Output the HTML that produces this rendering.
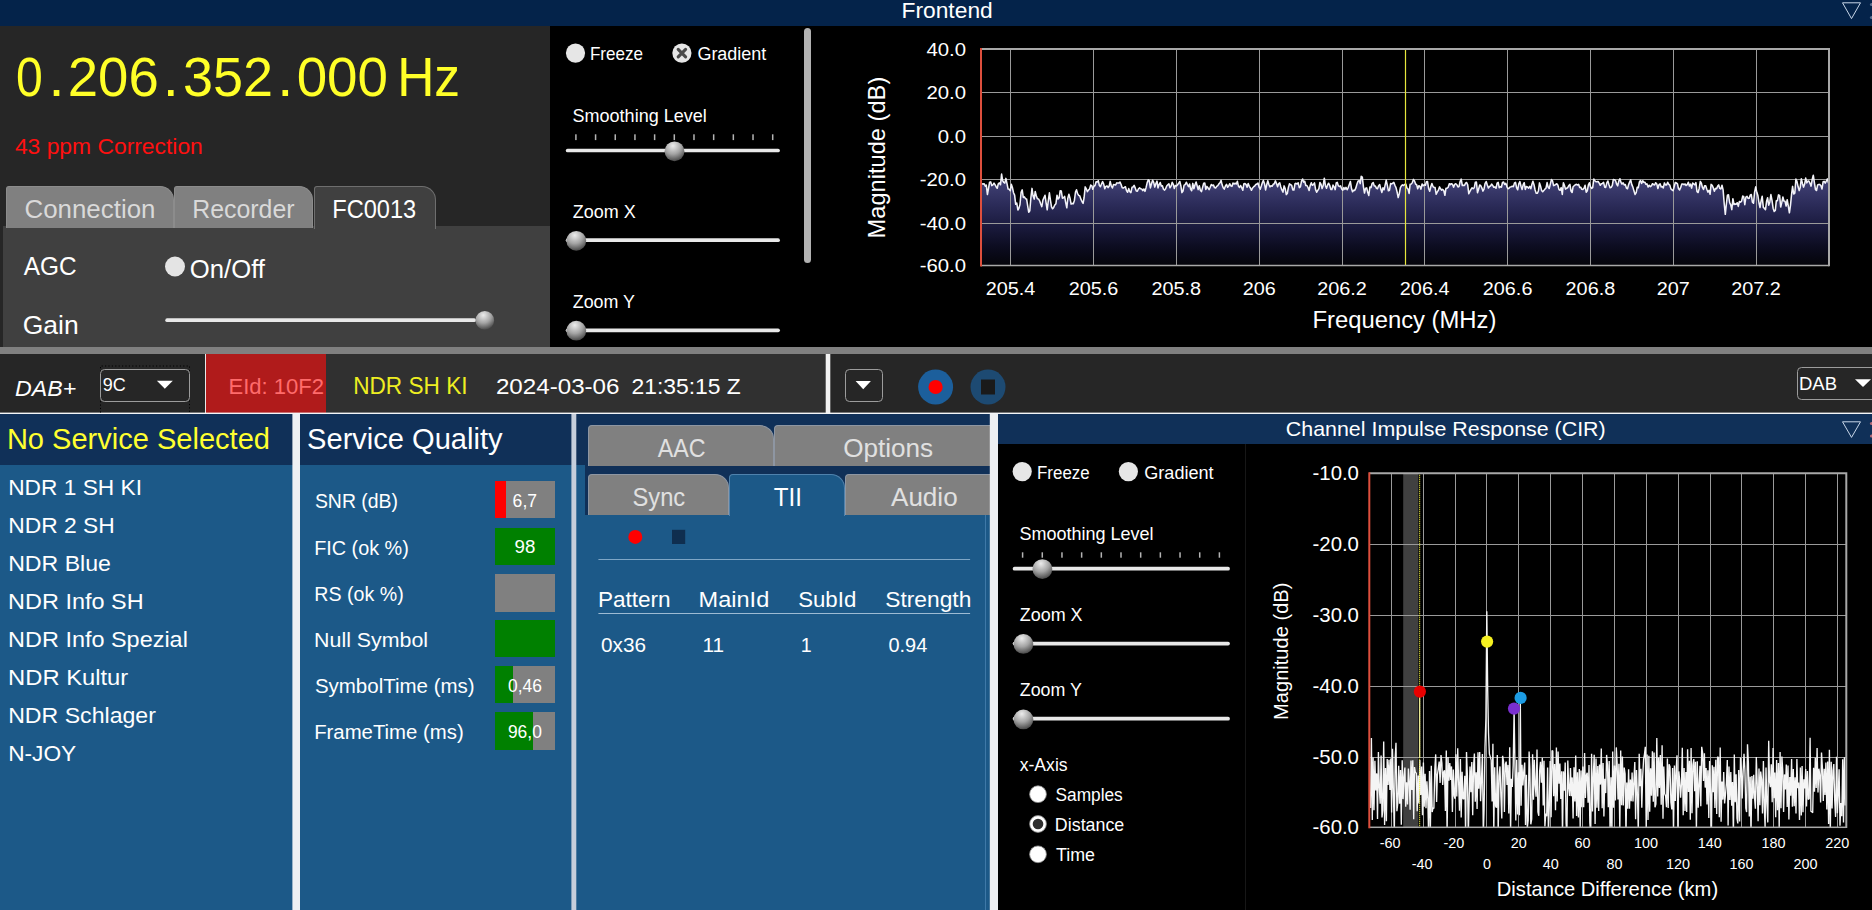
<!DOCTYPE html>
<html><head><meta charset="utf-8"><title>DAB Frontend</title>
<style>
html,body{margin:0;padding:0;background:#000;}
#app{position:relative;width:1872px;height:910px;overflow:hidden;background:#000;font-family:"Liberation Sans",sans-serif;}
#app div{position:absolute;box-sizing:border-box;}
#ov{position:absolute;left:0;top:0;}
#ov text{font-family:"Liberation Sans",sans-serif;white-space:pre;}
</style></head><body>
<div id="app">
<div class="titlebar" style="left:0px;top:0px;width:1872px;height:26px;background:#04234a;"></div>
<div class="frontend-left" style="left:0px;top:26px;width:550px;height:321px;background:#262626;"></div>
<div class="tabcontent" style="left:3px;top:226px;width:547px;height:121px;background:#404040;"></div>
<div class="tab" style="left:6px;top:186px;width:168px;height:42px;background:#808080;border:1px solid #8c8c8c;border-bottom:none;border-radius:3px 14px 0 0;"></div>
<div class="tab" style="left:174px;top:186px;width:139px;height:42px;background:#808080;border:1px solid #8c8c8c;border-bottom:none;border-radius:3px 14px 0 0;"></div>
<div class="tab" style="left:314px;top:186px;width:122px;height:43px;background:#404040;border:1px solid #6e6e6e;border-bottom:none;border-radius:3px 14px 0 0;"></div>
<div class="frontend-plot" style="left:550px;top:26px;width:1322px;height:321px;background:#000;"></div>
<div class="hsplit" style="left:0px;top:347px;width:1872px;height:7px;background:#808080;"></div>
<div class="toolbar-a" style="left:0px;top:354px;width:206px;height:59px;background:#262626;"></div>
<div style="left:205px;top:354px;width:1px;height:59px;background:#e8e8e8;"></div>
<div class="toolbar-b" style="left:206px;top:354px;width:620px;height:59px;background:#303030;"></div>
<div class="eid" style="left:206px;top:354px;width:120px;height:59px;background:#b01b1b;"></div>
<div style="left:826px;top:354px;width:4px;height:59px;background:#f2f2f2;"></div>
<div class="toolbar-c" style="left:830px;top:354px;width:1042px;height:59px;background:#262626;"></div>
<div class="hline" style="left:0px;top:412.5px;width:1872px;height:1.5px;background:#f4f6f8;"></div>
<div class="hdr" style="left:0px;top:414px;width:293px;height:51px;background:#103058;"></div>
<div class="list" style="left:0px;top:465px;width:293px;height:445px;background:#1c5988;"></div>
<div class="vsplit" style="left:292.5px;top:414px;width:7.5px;height:496px;background:#eef0f3;"></div>
<div class="hdr" style="left:300px;top:414px;width:272px;height:51px;background:#103058;"></div>
<div class="quality" style="left:300px;top:465px;width:272px;height:445px;background:#1c5988;"></div>
<div class="vsplit" style="left:571.5px;top:414px;width:4.8px;height:496px;background:#c6cedb;"></div>
<div class="hdr" style="left:576px;top:414px;width:414px;height:51px;background:#103058;"></div>
<div class="tii" style="left:576px;top:465px;width:414px;height:445px;background:#1c5988;"></div>
<div class="tabstrip" style="left:585px;top:414px;width:405px;height:101px;background:#103058;"></div>
<div style="left:985px;top:515px;width:1px;height:395px;background:#3f79a8;"></div>
<div class="vsplit" style="left:990px;top:414px;width:7.5px;height:496px;background:#eef0f3;"></div>
<div class="hdr" style="left:997.5px;top:414px;width:875px;height:30px;background:#103058;"></div>
<div class="cir" style="left:997.5px;top:444px;width:875px;height:466px;background:#000;"></div>
<div style="left:1245px;top:444px;width:1px;height:466px;background:#171717;"></div>
<div class="bar" style="left:495px;top:481px;width:60px;height:37.4px;background:#808080;"><div style="left:0;top:0;width:10.7px;height:100%;background:#ff0000"></div></div>
<div class="bar" style="left:495px;top:528px;width:60px;height:37.4px;background:#808080;"><div style="left:0;top:0;width:60px;height:100%;background:#008000"></div></div>
<div class="bar" style="left:495px;top:574.2px;width:60px;height:37.4px;background:#808080;"></div>
<div class="bar" style="left:495px;top:620px;width:60px;height:37.4px;background:#808080;"><div style="left:0;top:0;width:60px;height:100%;background:#008000"></div></div>
<div class="bar" style="left:495px;top:665.8px;width:60px;height:37.4px;background:#808080;"><div style="left:0;top:0;width:18px;height:100%;background:#008000"></div></div>
<div class="bar" style="left:495px;top:712.2px;width:60px;height:37.4px;background:#808080;"><div style="left:0;top:0;width:38px;height:100%;background:#008000"></div></div>
<div class="tab" style="left:588px;top:425px;width:185.60000000000002px;height:40.69999999999999px;background:#808080;border:1px solid #8e96a2;border-bottom:none;border-radius:4px 14px 0 0;"></div>
<div class="tab" style="left:773.6px;top:425px;width:216.39999999999998px;height:40.69999999999999px;background:#808080;border:1px solid #8e96a2;border-bottom:none;border-radius:4px 0 0 0;border-right:none;"></div>
<div class="tab" style="left:588px;top:474px;width:141.39999999999998px;height:41px;background:#808080;border:1px solid #8e96a2;border-bottom:none;border-radius:4px 14px 0 0;"></div>
<div class="tab" style="left:844.6px;top:474px;width:145.39999999999998px;height:41px;background:#808080;border:1px solid #8e96a2;border-bottom:none;border-radius:4px 0 0 0;border-right:none;"></div>
<div class="tabpanel" style="left:585px;top:515px;width:401px;height:395px;background:#1c5988;border-right:1px solid #3f79a8;"></div>
<div class="tab" style="left:729.4px;top:474px;width:115.20000000000005px;height:42px;background:#1c5988;border:1px solid #4f82ad;border-bottom:none;border-radius:4px 14px 0 0;"></div>
<svg id="ov" width="1872" height="910" viewBox="0 0 1872 910">
<defs>
<radialGradient id="knob" cx="0.42" cy="0.22" r="0.85"><stop offset="0" stop-color="#ececec"/><stop offset="0.5" stop-color="#a4a4a4"/><stop offset="1" stop-color="#383838"/></radialGradient>
<linearGradient id="specfill" gradientUnits="userSpaceOnUse" x1="0" y1="176" x2="0" y2="266"><stop offset="0" stop-color="#45457a"/><stop offset="0.3" stop-color="#2d2d5b"/><stop offset="0.53" stop-color="#1c1c41"/><stop offset="0.79" stop-color="#0c0c20"/><stop offset="1" stop-color="#040409"/></linearGradient>
<clipPath id="clip1"><rect x="981" y="49" width="848" height="217"/></clipPath>
<clipPath id="clip2"><rect x="1369" y="473" width="477" height="354.5"/></clipPath>
</defs>
<rect x="825.7" y="354" width="4.6" height="59" fill="#f2f2f2"/>
<rect x="0" y="412.6" width="1872" height="1.4" fill="#f4f6f8"/>
<rect x="989.8" y="414" width="7.6" height="496" fill="#eef0f3"/>
<rect x="571.4" y="414" width="4.9" height="496" fill="#c6cedb"/>
<rect x="292.4" y="414" width="7.6" height="496" fill="#eef0f3"/>
<text transform="translate(901.47,17.60) scale(1.0602,1)" font-size="21.53" fill="#ffffff" style="">Frontend</text>
<text transform="translate(24.51,217.60) scale(1.0111,1)" font-size="25.60" fill="#d9d9d9" style="">Connection</text>
<text transform="translate(192.21,217.60) scale(0.9723,1)" font-size="25.60" fill="#d9d9d9" style="">Recorder</text>
<text transform="translate(332.21,217.60) scale(0.9234,1)" font-size="25.60" fill="#ffffff" style="">FC0013</text>
<text transform="translate(14.89,153.80) scale(1.0766,1)" font-size="21.24" fill="#ff1010" style="">43 ppm Correction</text>
<text transform="translate(23.80,275.00) scale(0.9429,1)" font-size="25.89" fill="#ffffff" style="">AGC</text>
<text transform="translate(22.67,333.80) scale(1.0248,1)" font-size="25.89" fill="#ffffff" style="">Gain</text>
<text transform="translate(189.84,277.90) scale(1.0266,1)" font-size="25.02" fill="#ffffff" style="">On/Off</text>
<circle cx="175" cy="266.5" r="10" fill="#e4e4e4"/>
<text transform="translate(16.10,96.20) scale(0.8730,1)" font-size="55.13" fill="#ffff28" style="">0</text>
<text transform="translate(67.77,96.20) scale(0.9893,1)" font-size="55.13" fill="#ffff28" style="">206</text>
<text transform="translate(183.08,96.20) scale(0.9789,1)" font-size="55.13" fill="#ffff28" style="">352</text>
<text transform="translate(296.65,96.20) scale(0.9933,1)" font-size="55.13" fill="#ffff28" style="">000</text>
<text transform="translate(397.18,96.20) scale(0.9343,1)" font-size="55.13" fill="#ffff28" style="">Hz</text>
<text transform="translate(48.47,96.20) scale(1.0500,1)" font-size="55.13" fill="#ffff28">.</text>
<text transform="translate(162.77,96.20) scale(1.0500,1)" font-size="55.13" fill="#ffff28">.</text>
<text transform="translate(277.17,96.20) scale(1.0500,1)" font-size="55.13" fill="#ffff28">.</text>
<rect x="165.3" y="318.34999999999997" width="310.7" height="3.7" rx="1.85" fill="#e8e8e8"/>
<circle cx="484.8" cy="320.4" r="9.3" fill="url(#knob)"/>
<circle cx="575.5" cy="53.1" r="9.6" fill="#e6e6e6"/>
<text transform="translate(589.93,60.10) scale(0.9241,1)" font-size="18.47" fill="#ffffff" style="">Freeze</text>
<circle cx="681.9" cy="53.1" r="9.6" fill="#e6e6e6"/>
<path d="M678.2 49.4 L685.6 56.8 M685.6 49.4 L678.2 56.8" stroke="#4a4a4a" stroke-width="3.1" stroke-linecap="round" fill="none"/>
<text transform="translate(697.40,60.10) scale(0.9738,1)" font-size="18.47" fill="#ffffff" style="">Gradient</text>
<text transform="translate(572.59,122.00) scale(0.9750,1)" font-size="18.47" fill="#ffffff" style="">Smoothing Level</text>
<rect x="575.15" y="134.3" width="1.5" height="5.799999999999983" fill="#b4b4b4"/>
<rect x="594.83" y="134.3" width="1.5" height="5.799999999999983" fill="#b4b4b4"/>
<rect x="614.51" y="134.3" width="1.5" height="5.799999999999983" fill="#b4b4b4"/>
<rect x="634.19" y="134.3" width="1.5" height="5.799999999999983" fill="#b4b4b4"/>
<rect x="653.87" y="134.3" width="1.5" height="5.799999999999983" fill="#b4b4b4"/>
<rect x="673.55" y="134.3" width="1.5" height="5.799999999999983" fill="#b4b4b4"/>
<rect x="693.23" y="134.3" width="1.5" height="5.799999999999983" fill="#b4b4b4"/>
<rect x="712.91" y="134.3" width="1.5" height="5.799999999999983" fill="#b4b4b4"/>
<rect x="732.59" y="134.3" width="1.5" height="5.799999999999983" fill="#b4b4b4"/>
<rect x="752.27" y="134.3" width="1.5" height="5.799999999999983" fill="#b4b4b4"/>
<rect x="771.95" y="134.3" width="1.5" height="5.799999999999983" fill="#b4b4b4"/>
<rect x="565.8" y="148.65" width="214.10000000000002" height="3.7" rx="1.85" fill="#e8e8e8"/>
<circle cx="674.5" cy="151.3" r="9.9" fill="url(#knob)"/>
<text transform="translate(572.76,218.00) scale(0.9737,1)" font-size="18.47" fill="#ffffff" style="">Zoom X</text>
<rect x="565.8" y="238.35" width="214.10000000000002" height="3.7" rx="1.85" fill="#e8e8e8"/>
<circle cx="576.3" cy="240.8" r="9.9" fill="url(#knob)"/>
<text transform="translate(572.76,308.00) scale(0.9675,1)" font-size="18.47" fill="#ffffff" style="">Zoom Y</text>
<rect x="565.8" y="328.45" width="214.10000000000002" height="3.7" rx="1.85" fill="#e8e8e8"/>
<circle cx="576.3" cy="330.7" r="9.9" fill="url(#knob)"/>
<rect x="804" y="28" width="7" height="235" rx="3.5" fill="#b2b2b2"/>
<text transform="translate(15.11,395.90) scale(1.0538,1)" font-size="21.96" fill="#ffffff" style="font-style:italic;">DAB+</text>
<path d="M100.5 412.5 V366 H189.5 V412.5" fill="none" stroke="#000" stroke-width="1" stroke-dasharray="1.2 2.2"/>
<rect x="100.5" y="369.5" width="89" height="32" rx="4" fill="none" stroke="#9c9c9c" stroke-width="1"/>
<text transform="translate(102.69,391.30) scale(0.9371,1)" font-size="19.20" fill="#ffffff" style="">9C</text>
<path d="M156.9 380.8 L172.8 380.8 L164.85 388.8 Z" fill="#ffffff"/>
<text transform="translate(228.44,393.80) scale(0.9597,1)" font-size="22.98" fill="#ff6b6b" style="">EId: 10F2</text>
<text transform="translate(353.19,393.80) scale(0.9852,1)" font-size="22.98" fill="#eeee22" style="">NDR SH KI</text>
<text transform="translate(495.89,393.80) scale(1.0518,1)" font-size="22.98" fill="#ffffff" style="">2024-03-06</text>
<text transform="translate(631.46,393.80) scale(0.9962,1)" font-size="22.98" fill="#ffffff" style="">21:35:15 Z</text>
<rect x="845.5" y="369.5" width="37" height="32" rx="4" fill="none" stroke="#9c9c9c" stroke-width="1"/>
<path d="M855.6 381 L870.9 381 L863.25 389.2 Z" fill="#ffffff"/>
<circle cx="935.6" cy="387" r="17.5" fill="#1c5f9c"/><circle cx="935.6" cy="387" r="7.1" fill="#ff0000"/>
<circle cx="988" cy="387" r="17.5" fill="#1d4a72"/><rect x="981" y="379.5" width="14" height="15" fill="#1a1a1a"/>
<rect x="1797.5" y="367.5" width="90" height="32" rx="4" fill="none" stroke="#9c9c9c" stroke-width="1"/>
<text transform="translate(1799.02,389.80) scale(0.9632,1)" font-size="19.20" fill="#ffffff" style="">DAB</text>
<path d="M1855 379.3 L1871 379.3 L1863 387 Z" fill="#ffffff"/>
<path d="M1842.5 2.8 L1860.5 2.8 L1851.5 18.6 Z" fill="none" stroke="#c8d6e8" stroke-width="1"/>
<path d="M1842.5 421.8 L1860.5 421.8 L1851.5 437.4 Z" fill="none" stroke="#c8d6e8" stroke-width="1"/>
<circle cx="1871.5" cy="423.5" r="1.6" fill="#b06a78"/><circle cx="1871.5" cy="436" r="1.6" fill="#b06a78"/>
<circle cx="1871.5" cy="4.5" r="1.6" fill="#5a6f8f"/><circle cx="1871.5" cy="17.5" r="1.6" fill="#5a6f8f"/>
<text transform="translate(6.88,448.80) scale(0.9889,1)" font-size="29.38" fill="#ffff30" style="">No Service Selected</text>
<text transform="translate(8.18,495.40) scale(0.9889,1)" font-size="22.98" fill="#ffffff" style="">NDR 1 SH KI</text>
<text transform="translate(8.17,533.32) scale(0.9943,1)" font-size="22.98" fill="#ffffff" style="">NDR 2 SH</text>
<text transform="translate(8.15,571.24) scale(1.0067,1)" font-size="22.98" fill="#ffffff" style="">NDR Blue</text>
<text transform="translate(8.12,609.16) scale(1.0205,1)" font-size="22.98" fill="#ffffff" style="">NDR Info SH</text>
<text transform="translate(8.12,647.08) scale(1.0200,1)" font-size="22.98" fill="#ffffff" style="">NDR Info Spezial</text>
<text transform="translate(8.10,685.00) scale(1.0338,1)" font-size="22.98" fill="#ffffff" style="">NDR Kultur</text>
<text transform="translate(8.15,722.92) scale(1.0064,1)" font-size="22.98" fill="#ffffff" style="">NDR Schlager</text>
<text transform="translate(8.18,760.84) scale(0.9881,1)" font-size="22.98" fill="#ffffff" style="">N-JOY</text>
<text transform="translate(307.09,448.90) scale(0.9895,1)" font-size="29.38" fill="#ffffff" style="">Service Quality</text>
<text transform="translate(314.93,508.20) scale(0.9333,1)" font-size="20.80" fill="#ffffff" style="">SNR (dB)</text>
<text transform="translate(314.21,554.60) scale(0.9527,1)" font-size="20.80" fill="#ffffff" style="">FIC (ok %)</text>
<text transform="translate(314.23,600.60) scale(0.9441,1)" font-size="20.80" fill="#ffffff" style="">RS (ok %)</text>
<text transform="translate(314.09,646.80) scale(1.0273,1)" font-size="20.80" fill="#ffffff" style="">Null Symbol</text>
<text transform="translate(314.88,692.50) scale(0.9859,1)" font-size="20.80" fill="#ffffff" style="">SymbolTime (ms)</text>
<text transform="translate(314.17,738.60) scale(0.9782,1)" font-size="20.80" fill="#ffffff" style="">FrameTime (ms)</text>
<text transform="translate(512.62,506.80) scale(0.9507,1)" font-size="18.47" fill="#ffffff" style="">6,7</text>
<text transform="translate(514.56,553.20) scale(1.0140,1)" font-size="18.47" fill="#ffffff" style="">98</text>
<text transform="translate(508.05,692.00) scale(0.9434,1)" font-size="18.47" fill="#ffffff" style="">0,46</text>
<text transform="translate(507.91,738.00) scale(0.9446,1)" font-size="18.47" fill="#ffffff" style="">96,0</text>
<text transform="translate(657.80,456.90) scale(0.9089,1)" font-size="25.60" fill="#e0e0e0" style="">AAC</text>
<text transform="translate(843.23,456.90) scale(1.0196,1)" font-size="25.60" fill="#e0e0e0" style="">Options</text>
<text transform="translate(632.53,506.10) scale(0.9255,1)" font-size="25.60" fill="#e0e0e0" style="">Sync</text>
<text transform="translate(773.72,506.10) scale(0.9442,1)" font-size="25.60" fill="#ffffff" style="">TII</text>
<text transform="translate(891.00,506.10) scale(1.0179,1)" font-size="25.60" fill="#e0e0e0" style="">Audio</text>
<circle cx="635.3" cy="536.9" r="7" fill="#ff0000"/>
<rect x="672" y="529.8" width="13.2" height="14.2" fill="#0f2e4f"/>
<rect x="598.4" y="559" width="371.7" height="1" fill="#7ea6c6"/>
<text transform="translate(597.89,606.70) scale(1.0154,1)" font-size="22.25" fill="#ffffff" style="">Pattern</text>
<text transform="translate(698.62,606.70) scale(1.0583,1)" font-size="22.25" fill="#ffffff" style="">MainId</text>
<text transform="translate(798.20,606.70) scale(0.9991,1)" font-size="22.25" fill="#ffffff" style="">SubId</text>
<text transform="translate(885.27,606.70) scale(1.0241,1)" font-size="22.25" fill="#ffffff" style="">Strength</text>
<rect x="598.4" y="613" width="371.7" height="1" fill="#9dbbd3"/>
<text transform="translate(601.02,651.50) scale(1.0114,1)" font-size="20.51" fill="#ffffff" style="">0x36</text>
<text transform="translate(702.54,651.50) scale(1.0125,1)" font-size="20.51" fill="#ffffff" style="">11</text>
<text transform="translate(800.63,651.50) scale(0.9583,1)" font-size="20.51" fill="#ffffff" style="">1</text>
<text transform="translate(888.45,651.50) scale(0.9726,1)" font-size="20.51" fill="#ffffff" style="">0.94</text>
<text transform="translate(1285.83,435.60) scale(1.0151,1)" font-size="21.09" fill="#ffffff" style="">Channel Impulse Response (CIR)</text>
<circle cx="1022.2" cy="471.6" r="9.6" fill="#e6e6e6"/>
<text transform="translate(1037.05,478.80) scale(0.9151,1)" font-size="18.47" fill="#ffffff" style="">Freeze</text>
<circle cx="1128.4" cy="471.6" r="9.6" fill="#e6e6e6"/>
<text transform="translate(1144.30,478.80) scale(0.9781,1)" font-size="18.47" fill="#ffffff" style="">Gradient</text>
<text transform="translate(1019.49,540.10) scale(0.9750,1)" font-size="18.47" fill="#ffffff" style="">Smoothing Level</text>
<rect x="1021.85" y="552.3" width="1.5" height="5.400000000000091" fill="#b4b4b4"/>
<rect x="1041.53" y="552.3" width="1.5" height="5.400000000000091" fill="#b4b4b4"/>
<rect x="1061.21" y="552.3" width="1.5" height="5.400000000000091" fill="#b4b4b4"/>
<rect x="1080.89" y="552.3" width="1.5" height="5.400000000000091" fill="#b4b4b4"/>
<rect x="1100.57" y="552.3" width="1.5" height="5.400000000000091" fill="#b4b4b4"/>
<rect x="1120.25" y="552.3" width="1.5" height="5.400000000000091" fill="#b4b4b4"/>
<rect x="1139.93" y="552.3" width="1.5" height="5.400000000000091" fill="#b4b4b4"/>
<rect x="1159.61" y="552.3" width="1.5" height="5.400000000000091" fill="#b4b4b4"/>
<rect x="1179.29" y="552.3" width="1.5" height="5.400000000000091" fill="#b4b4b4"/>
<rect x="1198.97" y="552.3" width="1.5" height="5.400000000000091" fill="#b4b4b4"/>
<rect x="1218.65" y="552.3" width="1.5" height="5.400000000000091" fill="#b4b4b4"/>
<rect x="1012.7" y="566.85" width="217.20000000000005" height="3.7" rx="1.85" fill="#e8e8e8"/>
<circle cx="1042.4" cy="569.1" r="9.9" fill="url(#knob)"/>
<text transform="translate(1019.76,621.10) scale(0.9721,1)" font-size="18.47" fill="#ffffff" style="">Zoom X</text>
<rect x="1012.7" y="641.75" width="217.20000000000005" height="3.7" rx="1.85" fill="#e8e8e8"/>
<circle cx="1023.4" cy="643.9" r="9.9" fill="url(#knob)"/>
<text transform="translate(1019.76,695.80) scale(0.9659,1)" font-size="18.47" fill="#ffffff" style="">Zoom Y</text>
<rect x="1012.7" y="716.85" width="217.20000000000005" height="3.7" rx="1.85" fill="#e8e8e8"/>
<circle cx="1023.4" cy="719.4" r="9.9" fill="url(#knob)"/>
<text transform="translate(1019.72,770.80) scale(0.9832,1)" font-size="17.89" fill="#ffffff" style="">x-Axis</text>
<circle cx="1038" cy="794.2" r="8.4" fill="#ffffff" stroke="#8a8a8a" stroke-width="0.8"/>
<text transform="translate(1055.52,800.70) scale(0.9668,1)" font-size="17.89" fill="#ffffff" style="">Samples</text>
<circle cx="1038" cy="824.0" r="8.4" fill="#ffffff" stroke="#8a8a8a" stroke-width="0.8"/>
<circle cx="1038" cy="824.0" r="5.3" fill="#2e2e2e"/>
<text transform="translate(1054.87,830.60) scale(0.9970,1)" font-size="17.89" fill="#ffffff" style="">Distance</text>
<circle cx="1038" cy="854.3" r="8.4" fill="#ffffff" stroke="#8a8a8a" stroke-width="0.8"/>
<text transform="translate(1055.94,860.50) scale(0.9981,1)" font-size="17.89" fill="#ffffff" style="">Time</text>
<g id="spectrum"><polygon points="982.0,265.5 982.0,183.8 983.1,184.1 984.2,183.7 985.3,186.2 986.3,185.0 987.4,194.5 988.5,188.5 989.6,182.2 990.7,181.9 991.8,185.6 992.9,184.8 994.0,183.1 995.0,184.7 996.1,186.7 997.2,188.3 998.3,183.8 999.4,182.9 1000.5,184.8 1001.6,174.1 1002.6,180.5 1003.7,182.4 1004.8,183.1 1005.9,178.4 1007.0,183.7 1008.1,189.1 1009.2,189.2 1010.3,190.7 1011.3,184.3 1012.4,187.5 1013.5,192.7 1014.6,195.1 1015.7,204.3 1016.8,203.1 1017.9,210.0 1018.9,208.4 1020.0,204.5 1021.1,192.3 1022.2,189.9 1023.3,197.5 1024.4,196.9 1025.5,198.7 1026.6,198.9 1027.6,205.4 1028.7,212.2 1029.8,210.7 1030.9,197.6 1032.0,188.4 1033.1,196.1 1034.2,199.1 1035.2,191.5 1036.3,195.8 1037.4,198.8 1038.5,198.9 1039.6,200.8 1040.7,204.0 1041.8,206.6 1042.9,200.1 1043.9,197.8 1045.0,195.2 1046.1,202.9 1047.2,209.8 1048.3,200.9 1049.4,192.8 1050.5,200.6 1051.5,206.8 1052.6,208.8 1053.7,207.4 1054.8,205.0 1055.9,203.8 1057.0,195.3 1058.1,198.9 1059.2,197.7 1060.2,190.7 1061.3,191.0 1062.4,198.2 1063.5,197.7 1064.6,196.4 1065.7,202.6 1066.8,207.8 1067.8,198.4 1068.9,194.2 1070.0,198.2 1071.1,204.1 1072.2,203.4 1073.3,203.7 1074.4,200.4 1075.5,192.0 1076.5,189.7 1077.6,193.6 1078.7,195.4 1079.8,196.0 1080.9,199.2 1082.0,201.5 1083.1,203.4 1084.1,197.5 1085.2,186.9 1086.3,188.8 1087.4,191.6 1088.5,190.1 1089.6,188.9 1090.7,185.1 1091.8,185.6 1092.8,189.2 1093.9,186.3 1095.0,185.5 1096.1,181.7 1097.2,182.0 1098.3,180.7 1099.4,185.6 1100.4,186.7 1101.5,184.0 1102.6,181.6 1103.7,184.1 1104.8,188.7 1105.9,186.4 1107.0,185.9 1108.1,187.6 1109.1,186.3 1110.2,181.4 1111.3,186.0 1112.4,188.0 1113.5,184.5 1114.6,184.7 1115.7,185.0 1116.7,182.9 1117.8,183.0 1118.9,183.1 1120.0,182.1 1121.1,184.5 1122.2,187.7 1123.3,188.0 1124.4,187.4 1125.4,186.7 1126.5,190.6 1127.6,192.3 1128.7,188.6 1129.8,191.7 1130.9,192.6 1132.0,187.3 1133.0,187.0 1134.1,185.4 1135.2,187.9 1136.3,190.9 1137.4,191.2 1138.5,188.8 1139.6,187.9 1140.7,188.8 1141.7,189.0 1142.8,190.7 1143.9,189.0 1145.0,191.4 1146.1,187.4 1147.2,182.6 1148.3,179.9 1149.3,180.9 1150.4,187.9 1151.5,183.7 1152.6,180.2 1153.7,182.4 1154.8,187.1 1155.9,183.5 1157.0,181.1 1158.0,187.9 1159.1,184.6 1160.2,182.5 1161.3,186.1 1162.4,185.7 1163.5,189.2 1164.6,190.1 1165.6,188.8 1166.7,186.0 1167.8,184.8 1168.9,183.8 1170.0,187.7 1171.1,186.1 1172.2,182.3 1173.3,184.3 1174.3,188.5 1175.4,185.5 1176.5,186.1 1177.6,184.7 1178.7,183.1 1179.8,181.5 1180.9,186.0 1181.9,192.6 1183.0,191.0 1184.1,185.1 1185.2,184.6 1186.3,182.2 1187.4,184.5 1188.5,186.6 1189.6,184.0 1190.6,189.1 1191.7,190.7 1192.8,183.4 1193.9,188.8 1195.0,184.7 1196.1,182.0 1197.2,186.0 1198.2,189.6 1199.3,185.8 1200.4,190.4 1201.5,191.6 1202.6,187.4 1203.7,183.3 1204.8,183.1 1205.8,189.5 1206.9,186.4 1208.0,187.8 1209.1,189.7 1210.2,187.2 1211.3,184.5 1212.4,185.5 1213.5,185.1 1214.5,187.6 1215.6,188.0 1216.7,186.4 1217.8,185.6 1218.9,183.9 1220.0,182.8 1221.1,180.4 1222.1,184.8 1223.2,187.7 1224.3,189.1 1225.4,186.0 1226.5,184.3 1227.6,187.3 1228.7,185.9 1229.8,183.7 1230.8,185.9 1231.9,186.4 1233.0,183.1 1234.1,184.0 1235.2,183.2 1236.3,184.0 1237.4,181.3 1238.4,186.1 1239.5,187.4 1240.6,185.5 1241.7,187.7 1242.8,190.3 1243.9,183.7 1245.0,183.6 1246.1,184.6 1247.1,187.2 1248.2,183.5 1249.3,186.3 1250.4,188.0 1251.5,190.3 1252.6,187.9 1253.7,186.7 1254.7,186.0 1255.8,184.5 1256.9,184.1 1258.0,183.1 1259.1,187.1 1260.2,189.2 1261.3,186.1 1262.4,182.5 1263.4,180.4 1264.5,183.7 1265.6,189.9 1266.7,184.8 1267.8,180.8 1268.9,184.5 1270.0,186.9 1271.0,185.8 1272.1,186.3 1273.2,184.3 1274.3,183.7 1275.4,180.9 1276.5,183.5 1277.6,186.8 1278.7,183.6 1279.7,182.8 1280.8,186.9 1281.9,189.9 1283.0,192.2 1284.1,185.9 1285.2,188.7 1286.3,194.6 1287.3,193.5 1288.4,187.4 1289.5,183.7 1290.6,184.7 1291.7,185.5 1292.8,189.9 1293.9,190.0 1295.0,183.8 1296.0,183.3 1297.1,184.0 1298.2,182.8 1299.3,187.7 1300.4,186.9 1301.5,181.1 1302.6,179.0 1303.6,182.1 1304.7,181.2 1305.8,185.5 1306.9,185.5 1308.0,187.5 1309.1,190.5 1310.2,185.6 1311.3,182.7 1312.3,185.3 1313.4,184.6 1314.5,182.8 1315.6,189.6 1316.7,192.2 1317.8,190.4 1318.9,188.6 1319.9,182.5 1321.0,184.2 1322.1,188.6 1323.2,185.5 1324.3,178.2 1325.4,185.4 1326.5,188.3 1327.6,184.9 1328.6,183.2 1329.7,185.3 1330.8,189.4 1331.9,189.5 1333.0,185.1 1334.1,186.9 1335.2,189.6 1336.2,183.0 1337.3,182.4 1338.4,185.9 1339.5,186.5 1340.6,185.9 1341.7,188.9 1342.8,190.2 1343.9,187.5 1344.9,189.4 1346.0,187.4 1347.1,189.8 1348.2,187.6 1349.3,184.4 1350.4,181.5 1351.5,188.6 1352.5,191.8 1353.6,190.2 1354.7,190.4 1355.8,188.2 1356.9,184.2 1358.0,181.2 1359.1,180.6 1360.2,183.6 1361.2,176.3 1362.3,177.1 1363.4,186.6 1364.5,193.0 1365.6,188.2 1366.7,187.9 1367.8,192.6 1368.8,195.5 1369.9,187.0 1371.0,187.7 1372.1,183.5 1373.2,182.5 1374.3,185.9 1375.4,186.1 1376.5,188.3 1377.5,188.7 1378.6,185.7 1379.7,184.6 1380.8,189.1 1381.9,192.4 1383.0,187.8 1384.1,189.8 1385.1,185.1 1386.2,180.1 1387.3,185.1 1388.4,190.8 1389.5,190.2 1390.6,183.6 1391.7,184.0 1392.8,183.1 1393.8,182.4 1394.9,185.2 1396.0,187.6 1397.1,192.0 1398.2,197.6 1399.3,193.5 1400.4,187.6 1401.4,185.9 1402.5,184.8 1403.6,185.5 1404.7,184.5 1405.8,184.0 1406.9,187.9 1408.0,189.1 1409.1,193.4 1410.1,184.3 1411.2,184.1 1412.3,182.6 1413.4,179.4 1414.5,180.9 1415.6,184.0 1416.7,184.8 1417.7,188.8 1418.8,185.7 1419.9,186.5 1421.0,189.1 1422.1,184.0 1423.2,185.8 1424.3,184.7 1425.4,185.3 1426.4,181.7 1427.5,181.5 1428.6,188.4 1429.7,191.3 1430.8,186.8 1431.9,183.6 1433.0,186.6 1434.0,187.4 1435.1,187.6 1436.2,194.3 1437.3,191.9 1438.4,190.3 1439.5,186.9 1440.6,188.8 1441.7,190.2 1442.7,189.4 1443.8,190.6 1444.9,195.3 1446.0,188.2 1447.1,188.3 1448.2,187.3 1449.3,183.7 1450.3,184.6 1451.4,183.7 1452.5,184.5 1453.6,187.1 1454.7,184.4 1455.8,183.7 1456.9,184.8 1458.0,187.0 1459.0,186.6 1460.1,181.5 1461.2,179.1 1462.3,185.5 1463.4,185.3 1464.5,185.5 1465.6,183.2 1466.6,182.5 1467.7,184.8 1468.8,193.8 1469.9,191.4 1471.0,189.4 1472.1,187.8 1473.2,188.7 1474.3,187.7 1475.3,182.3 1476.4,182.1 1477.5,192.7 1478.6,189.2 1479.7,185.0 1480.8,185.7 1481.9,188.1 1482.9,191.1 1484.0,189.2 1485.1,183.3 1486.2,181.6 1487.3,185.1 1488.4,188.0 1489.5,186.5 1490.6,185.8 1491.6,184.1 1492.7,185.4 1493.8,187.3 1494.9,186.9 1496.0,188.3 1497.1,183.2 1498.2,182.4 1499.2,187.7 1500.3,186.6 1501.4,187.2 1502.5,182.5 1503.6,182.1 1504.7,184.5 1505.8,183.3 1506.9,186.6 1507.9,188.7 1509.0,188.2 1510.1,187.0 1511.2,186.7 1512.3,186.2 1513.4,186.6 1514.5,182.9 1515.5,182.3 1516.6,187.6 1517.7,189.8 1518.8,183.8 1519.9,181.6 1521.0,186.3 1522.1,189.5 1523.2,184.6 1524.2,182.7 1525.3,189.4 1526.4,186.5 1527.5,187.0 1528.6,188.1 1529.7,186.4 1530.8,188.8 1531.8,184.8 1532.9,181.2 1534.0,184.7 1535.1,190.0 1536.2,193.3 1537.3,193.3 1538.4,191.0 1539.5,182.9 1540.5,185.9 1541.6,190.5 1542.7,191.8 1543.8,190.6 1544.9,189.1 1546.0,188.2 1547.1,182.6 1548.1,187.1 1549.2,188.5 1550.3,184.1 1551.4,179.6 1552.5,180.7 1553.6,185.6 1554.7,185.2 1555.8,184.4 1556.8,183.7 1557.9,185.3 1559.0,189.6 1560.1,190.3 1561.2,187.6 1562.3,194.4 1563.4,182.7 1564.4,185.2 1565.5,189.1 1566.6,188.2 1567.7,187.7 1568.8,185.6 1569.9,184.4 1571.0,191.0 1572.1,192.5 1573.1,186.7 1574.2,185.7 1575.3,184.9 1576.4,184.3 1577.5,185.0 1578.6,184.3 1579.7,187.5 1580.7,187.2 1581.8,189.3 1582.9,189.4 1584.0,188.3 1585.1,185.3 1586.2,192.2 1587.3,190.8 1588.4,184.8 1589.4,182.8 1590.5,186.8 1591.6,188.4 1592.7,187.6 1593.8,179.0 1594.9,180.8 1596.0,181.8 1597.0,181.8 1598.1,181.5 1599.2,183.2 1600.3,185.3 1601.4,183.7 1602.5,183.4 1603.6,182.4 1604.7,187.2 1605.7,187.4 1606.8,182.9 1607.9,181.0 1609.0,184.7 1610.1,187.8 1611.2,187.3 1612.3,185.4 1613.3,179.5 1614.4,179.7 1615.5,180.6 1616.6,184.0 1617.7,185.9 1618.8,181.0 1619.9,178.8 1620.9,182.2 1622.0,184.1 1623.1,182.8 1624.2,184.9 1625.3,184.5 1626.4,188.1 1627.5,188.8 1628.6,184.6 1629.6,182.1 1630.7,179.8 1631.8,184.6 1632.9,187.1 1634.0,191.1 1635.1,194.4 1636.2,192.6 1637.2,187.3 1638.3,187.7 1639.4,182.0 1640.5,180.5 1641.6,183.4 1642.7,180.7 1643.8,182.2 1644.9,182.2 1645.9,184.3 1647.0,183.9 1648.1,187.0 1649.2,185.2 1650.3,186.6 1651.4,185.9 1652.5,183.7 1653.5,184.6 1654.6,185.0 1655.7,182.7 1656.8,183.9 1657.9,188.5 1659.0,184.7 1660.1,183.8 1661.2,186.9 1662.2,186.6 1663.3,187.9 1664.4,182.9 1665.5,185.0 1666.6,184.9 1667.7,182.3 1668.8,184.3 1669.8,185.1 1670.9,188.9 1672.0,189.9 1673.1,190.7 1674.2,186.7 1675.3,182.5 1676.4,183.0 1677.5,183.8 1678.5,188.8 1679.6,189.9 1680.7,187.4 1681.8,184.0 1682.9,184.0 1684.0,184.7 1685.1,184.0 1686.1,185.5 1687.2,184.6 1688.3,182.3 1689.4,186.0 1690.5,184.1 1691.6,188.1 1692.7,183.0 1693.8,184.0 1694.8,184.8 1695.9,182.6 1697.0,191.7 1698.1,192.5 1699.2,188.4 1700.3,181.4 1701.4,183.2 1702.4,187.4 1703.5,189.5 1704.6,185.8 1705.7,185.7 1706.8,189.2 1707.9,192.1 1709.0,190.4 1710.1,194.2 1711.1,184.4 1712.2,185.3 1713.3,187.9 1714.4,191.2 1715.5,188.4 1716.6,188.8 1717.7,186.1 1718.7,184.9 1719.8,188.4 1720.9,189.0 1722.0,185.2 1723.1,189.9 1724.2,203.5 1725.3,214.3 1726.4,203.8 1727.4,195.3 1728.5,194.8 1729.6,202.5 1730.7,204.9 1731.8,209.6 1732.9,198.7 1734.0,204.5 1735.0,203.9 1736.1,204.2 1737.2,202.7 1738.3,206.4 1739.4,201.5 1740.5,202.2 1741.6,201.1 1742.7,196.1 1743.7,196.5 1744.8,204.7 1745.9,197.1 1747.0,196.3 1748.1,198.4 1749.2,198.3 1750.3,194.9 1751.3,194.6 1752.4,202.2 1753.5,203.2 1754.6,192.2 1755.7,186.9 1756.8,192.3 1757.9,195.6 1759.0,203.0 1760.0,207.5 1761.1,200.9 1762.2,196.3 1763.3,207.3 1764.4,208.4 1765.5,209.7 1766.6,201.2 1767.6,197.7 1768.7,205.2 1769.8,201.9 1770.9,194.6 1772.0,200.4 1773.1,208.2 1774.2,211.4 1775.3,210.5 1776.3,200.8 1777.4,200.7 1778.5,194.9 1779.6,195.4 1780.7,207.0 1781.8,202.4 1782.9,197.0 1783.9,201.0 1785.0,201.2 1786.1,206.0 1787.2,199.7 1788.3,206.2 1789.4,212.8 1790.5,205.1 1791.6,194.0 1792.6,186.4 1793.7,194.0 1794.8,193.2 1795.9,179.0 1797.0,181.6 1798.1,186.8 1799.2,190.6 1800.2,187.6 1801.3,178.8 1802.4,183.3 1803.5,187.1 1804.6,184.3 1805.7,178.1 1806.8,182.9 1807.9,181.1 1808.9,181.0 1810.0,183.3 1811.1,186.1 1812.2,179.4 1813.3,175.3 1814.4,182.7 1815.5,189.7 1816.5,190.5 1817.6,185.0 1818.7,184.6 1819.8,184.4 1820.9,185.8 1822.0,189.0 1823.1,181.8 1824.2,181.4 1825.2,183.1 1826.3,181.2 1827.4,178.9 1828.5,183.1 1828.0,265.5" fill="url(#specfill)"/><rect x="981.0" y="92.0" width="848.0" height="1" fill="#9a9a9a"/><rect x="981.0" y="136.0" width="848.0" height="1" fill="#9a9a9a"/><rect x="981.0" y="179.0" width="848.0" height="1" fill="#9a9a9a"/><rect x="981.0" y="223.0" width="848.0" height="1" fill="#9a9a9a"/><rect x="1010" y="49.0" width="1" height="216.5" fill="#9a9a9a"/><rect x="1093" y="49.0" width="1" height="216.5" fill="#9a9a9a"/><rect x="1176" y="49.0" width="1" height="216.5" fill="#9a9a9a"/><rect x="1259" y="49.0" width="1" height="216.5" fill="#9a9a9a"/><rect x="1342" y="49.0" width="1" height="216.5" fill="#9a9a9a"/><rect x="1424" y="49.0" width="1" height="216.5" fill="#9a9a9a"/><rect x="1507" y="49.0" width="1" height="216.5" fill="#9a9a9a"/><rect x="1590" y="49.0" width="1" height="216.5" fill="#9a9a9a"/><rect x="1673" y="49.0" width="1" height="216.5" fill="#9a9a9a"/><rect x="1756" y="49.0" width="1" height="216.5" fill="#9a9a9a"/><polyline points="982.0,183.8 983.1,184.1 984.2,183.7 985.3,186.2 986.3,185.0 987.4,194.5 988.5,188.5 989.6,182.2 990.7,181.9 991.8,185.6 992.9,184.8 994.0,183.1 995.0,184.7 996.1,186.7 997.2,188.3 998.3,183.8 999.4,182.9 1000.5,184.8 1001.6,174.1 1002.6,180.5 1003.7,182.4 1004.8,183.1 1005.9,178.4 1007.0,183.7 1008.1,189.1 1009.2,189.2 1010.3,190.7 1011.3,184.3 1012.4,187.5 1013.5,192.7 1014.6,195.1 1015.7,204.3 1016.8,203.1 1017.9,210.0 1018.9,208.4 1020.0,204.5 1021.1,192.3 1022.2,189.9 1023.3,197.5 1024.4,196.9 1025.5,198.7 1026.6,198.9 1027.6,205.4 1028.7,212.2 1029.8,210.7 1030.9,197.6 1032.0,188.4 1033.1,196.1 1034.2,199.1 1035.2,191.5 1036.3,195.8 1037.4,198.8 1038.5,198.9 1039.6,200.8 1040.7,204.0 1041.8,206.6 1042.9,200.1 1043.9,197.8 1045.0,195.2 1046.1,202.9 1047.2,209.8 1048.3,200.9 1049.4,192.8 1050.5,200.6 1051.5,206.8 1052.6,208.8 1053.7,207.4 1054.8,205.0 1055.9,203.8 1057.0,195.3 1058.1,198.9 1059.2,197.7 1060.2,190.7 1061.3,191.0 1062.4,198.2 1063.5,197.7 1064.6,196.4 1065.7,202.6 1066.8,207.8 1067.8,198.4 1068.9,194.2 1070.0,198.2 1071.1,204.1 1072.2,203.4 1073.3,203.7 1074.4,200.4 1075.5,192.0 1076.5,189.7 1077.6,193.6 1078.7,195.4 1079.8,196.0 1080.9,199.2 1082.0,201.5 1083.1,203.4 1084.1,197.5 1085.2,186.9 1086.3,188.8 1087.4,191.6 1088.5,190.1 1089.6,188.9 1090.7,185.1 1091.8,185.6 1092.8,189.2 1093.9,186.3 1095.0,185.5 1096.1,181.7 1097.2,182.0 1098.3,180.7 1099.4,185.6 1100.4,186.7 1101.5,184.0 1102.6,181.6 1103.7,184.1 1104.8,188.7 1105.9,186.4 1107.0,185.9 1108.1,187.6 1109.1,186.3 1110.2,181.4 1111.3,186.0 1112.4,188.0 1113.5,184.5 1114.6,184.7 1115.7,185.0 1116.7,182.9 1117.8,183.0 1118.9,183.1 1120.0,182.1 1121.1,184.5 1122.2,187.7 1123.3,188.0 1124.4,187.4 1125.4,186.7 1126.5,190.6 1127.6,192.3 1128.7,188.6 1129.8,191.7 1130.9,192.6 1132.0,187.3 1133.0,187.0 1134.1,185.4 1135.2,187.9 1136.3,190.9 1137.4,191.2 1138.5,188.8 1139.6,187.9 1140.7,188.8 1141.7,189.0 1142.8,190.7 1143.9,189.0 1145.0,191.4 1146.1,187.4 1147.2,182.6 1148.3,179.9 1149.3,180.9 1150.4,187.9 1151.5,183.7 1152.6,180.2 1153.7,182.4 1154.8,187.1 1155.9,183.5 1157.0,181.1 1158.0,187.9 1159.1,184.6 1160.2,182.5 1161.3,186.1 1162.4,185.7 1163.5,189.2 1164.6,190.1 1165.6,188.8 1166.7,186.0 1167.8,184.8 1168.9,183.8 1170.0,187.7 1171.1,186.1 1172.2,182.3 1173.3,184.3 1174.3,188.5 1175.4,185.5 1176.5,186.1 1177.6,184.7 1178.7,183.1 1179.8,181.5 1180.9,186.0 1181.9,192.6 1183.0,191.0 1184.1,185.1 1185.2,184.6 1186.3,182.2 1187.4,184.5 1188.5,186.6 1189.6,184.0 1190.6,189.1 1191.7,190.7 1192.8,183.4 1193.9,188.8 1195.0,184.7 1196.1,182.0 1197.2,186.0 1198.2,189.6 1199.3,185.8 1200.4,190.4 1201.5,191.6 1202.6,187.4 1203.7,183.3 1204.8,183.1 1205.8,189.5 1206.9,186.4 1208.0,187.8 1209.1,189.7 1210.2,187.2 1211.3,184.5 1212.4,185.5 1213.5,185.1 1214.5,187.6 1215.6,188.0 1216.7,186.4 1217.8,185.6 1218.9,183.9 1220.0,182.8 1221.1,180.4 1222.1,184.8 1223.2,187.7 1224.3,189.1 1225.4,186.0 1226.5,184.3 1227.6,187.3 1228.7,185.9 1229.8,183.7 1230.8,185.9 1231.9,186.4 1233.0,183.1 1234.1,184.0 1235.2,183.2 1236.3,184.0 1237.4,181.3 1238.4,186.1 1239.5,187.4 1240.6,185.5 1241.7,187.7 1242.8,190.3 1243.9,183.7 1245.0,183.6 1246.1,184.6 1247.1,187.2 1248.2,183.5 1249.3,186.3 1250.4,188.0 1251.5,190.3 1252.6,187.9 1253.7,186.7 1254.7,186.0 1255.8,184.5 1256.9,184.1 1258.0,183.1 1259.1,187.1 1260.2,189.2 1261.3,186.1 1262.4,182.5 1263.4,180.4 1264.5,183.7 1265.6,189.9 1266.7,184.8 1267.8,180.8 1268.9,184.5 1270.0,186.9 1271.0,185.8 1272.1,186.3 1273.2,184.3 1274.3,183.7 1275.4,180.9 1276.5,183.5 1277.6,186.8 1278.7,183.6 1279.7,182.8 1280.8,186.9 1281.9,189.9 1283.0,192.2 1284.1,185.9 1285.2,188.7 1286.3,194.6 1287.3,193.5 1288.4,187.4 1289.5,183.7 1290.6,184.7 1291.7,185.5 1292.8,189.9 1293.9,190.0 1295.0,183.8 1296.0,183.3 1297.1,184.0 1298.2,182.8 1299.3,187.7 1300.4,186.9 1301.5,181.1 1302.6,179.0 1303.6,182.1 1304.7,181.2 1305.8,185.5 1306.9,185.5 1308.0,187.5 1309.1,190.5 1310.2,185.6 1311.3,182.7 1312.3,185.3 1313.4,184.6 1314.5,182.8 1315.6,189.6 1316.7,192.2 1317.8,190.4 1318.9,188.6 1319.9,182.5 1321.0,184.2 1322.1,188.6 1323.2,185.5 1324.3,178.2 1325.4,185.4 1326.5,188.3 1327.6,184.9 1328.6,183.2 1329.7,185.3 1330.8,189.4 1331.9,189.5 1333.0,185.1 1334.1,186.9 1335.2,189.6 1336.2,183.0 1337.3,182.4 1338.4,185.9 1339.5,186.5 1340.6,185.9 1341.7,188.9 1342.8,190.2 1343.9,187.5 1344.9,189.4 1346.0,187.4 1347.1,189.8 1348.2,187.6 1349.3,184.4 1350.4,181.5 1351.5,188.6 1352.5,191.8 1353.6,190.2 1354.7,190.4 1355.8,188.2 1356.9,184.2 1358.0,181.2 1359.1,180.6 1360.2,183.6 1361.2,176.3 1362.3,177.1 1363.4,186.6 1364.5,193.0 1365.6,188.2 1366.7,187.9 1367.8,192.6 1368.8,195.5 1369.9,187.0 1371.0,187.7 1372.1,183.5 1373.2,182.5 1374.3,185.9 1375.4,186.1 1376.5,188.3 1377.5,188.7 1378.6,185.7 1379.7,184.6 1380.8,189.1 1381.9,192.4 1383.0,187.8 1384.1,189.8 1385.1,185.1 1386.2,180.1 1387.3,185.1 1388.4,190.8 1389.5,190.2 1390.6,183.6 1391.7,184.0 1392.8,183.1 1393.8,182.4 1394.9,185.2 1396.0,187.6 1397.1,192.0 1398.2,197.6 1399.3,193.5 1400.4,187.6 1401.4,185.9 1402.5,184.8 1403.6,185.5 1404.7,184.5 1405.8,184.0 1406.9,187.9 1408.0,189.1 1409.1,193.4 1410.1,184.3 1411.2,184.1 1412.3,182.6 1413.4,179.4 1414.5,180.9 1415.6,184.0 1416.7,184.8 1417.7,188.8 1418.8,185.7 1419.9,186.5 1421.0,189.1 1422.1,184.0 1423.2,185.8 1424.3,184.7 1425.4,185.3 1426.4,181.7 1427.5,181.5 1428.6,188.4 1429.7,191.3 1430.8,186.8 1431.9,183.6 1433.0,186.6 1434.0,187.4 1435.1,187.6 1436.2,194.3 1437.3,191.9 1438.4,190.3 1439.5,186.9 1440.6,188.8 1441.7,190.2 1442.7,189.4 1443.8,190.6 1444.9,195.3 1446.0,188.2 1447.1,188.3 1448.2,187.3 1449.3,183.7 1450.3,184.6 1451.4,183.7 1452.5,184.5 1453.6,187.1 1454.7,184.4 1455.8,183.7 1456.9,184.8 1458.0,187.0 1459.0,186.6 1460.1,181.5 1461.2,179.1 1462.3,185.5 1463.4,185.3 1464.5,185.5 1465.6,183.2 1466.6,182.5 1467.7,184.8 1468.8,193.8 1469.9,191.4 1471.0,189.4 1472.1,187.8 1473.2,188.7 1474.3,187.7 1475.3,182.3 1476.4,182.1 1477.5,192.7 1478.6,189.2 1479.7,185.0 1480.8,185.7 1481.9,188.1 1482.9,191.1 1484.0,189.2 1485.1,183.3 1486.2,181.6 1487.3,185.1 1488.4,188.0 1489.5,186.5 1490.6,185.8 1491.6,184.1 1492.7,185.4 1493.8,187.3 1494.9,186.9 1496.0,188.3 1497.1,183.2 1498.2,182.4 1499.2,187.7 1500.3,186.6 1501.4,187.2 1502.5,182.5 1503.6,182.1 1504.7,184.5 1505.8,183.3 1506.9,186.6 1507.9,188.7 1509.0,188.2 1510.1,187.0 1511.2,186.7 1512.3,186.2 1513.4,186.6 1514.5,182.9 1515.5,182.3 1516.6,187.6 1517.7,189.8 1518.8,183.8 1519.9,181.6 1521.0,186.3 1522.1,189.5 1523.2,184.6 1524.2,182.7 1525.3,189.4 1526.4,186.5 1527.5,187.0 1528.6,188.1 1529.7,186.4 1530.8,188.8 1531.8,184.8 1532.9,181.2 1534.0,184.7 1535.1,190.0 1536.2,193.3 1537.3,193.3 1538.4,191.0 1539.5,182.9 1540.5,185.9 1541.6,190.5 1542.7,191.8 1543.8,190.6 1544.9,189.1 1546.0,188.2 1547.1,182.6 1548.1,187.1 1549.2,188.5 1550.3,184.1 1551.4,179.6 1552.5,180.7 1553.6,185.6 1554.7,185.2 1555.8,184.4 1556.8,183.7 1557.9,185.3 1559.0,189.6 1560.1,190.3 1561.2,187.6 1562.3,194.4 1563.4,182.7 1564.4,185.2 1565.5,189.1 1566.6,188.2 1567.7,187.7 1568.8,185.6 1569.9,184.4 1571.0,191.0 1572.1,192.5 1573.1,186.7 1574.2,185.7 1575.3,184.9 1576.4,184.3 1577.5,185.0 1578.6,184.3 1579.7,187.5 1580.7,187.2 1581.8,189.3 1582.9,189.4 1584.0,188.3 1585.1,185.3 1586.2,192.2 1587.3,190.8 1588.4,184.8 1589.4,182.8 1590.5,186.8 1591.6,188.4 1592.7,187.6 1593.8,179.0 1594.9,180.8 1596.0,181.8 1597.0,181.8 1598.1,181.5 1599.2,183.2 1600.3,185.3 1601.4,183.7 1602.5,183.4 1603.6,182.4 1604.7,187.2 1605.7,187.4 1606.8,182.9 1607.9,181.0 1609.0,184.7 1610.1,187.8 1611.2,187.3 1612.3,185.4 1613.3,179.5 1614.4,179.7 1615.5,180.6 1616.6,184.0 1617.7,185.9 1618.8,181.0 1619.9,178.8 1620.9,182.2 1622.0,184.1 1623.1,182.8 1624.2,184.9 1625.3,184.5 1626.4,188.1 1627.5,188.8 1628.6,184.6 1629.6,182.1 1630.7,179.8 1631.8,184.6 1632.9,187.1 1634.0,191.1 1635.1,194.4 1636.2,192.6 1637.2,187.3 1638.3,187.7 1639.4,182.0 1640.5,180.5 1641.6,183.4 1642.7,180.7 1643.8,182.2 1644.9,182.2 1645.9,184.3 1647.0,183.9 1648.1,187.0 1649.2,185.2 1650.3,186.6 1651.4,185.9 1652.5,183.7 1653.5,184.6 1654.6,185.0 1655.7,182.7 1656.8,183.9 1657.9,188.5 1659.0,184.7 1660.1,183.8 1661.2,186.9 1662.2,186.6 1663.3,187.9 1664.4,182.9 1665.5,185.0 1666.6,184.9 1667.7,182.3 1668.8,184.3 1669.8,185.1 1670.9,188.9 1672.0,189.9 1673.1,190.7 1674.2,186.7 1675.3,182.5 1676.4,183.0 1677.5,183.8 1678.5,188.8 1679.6,189.9 1680.7,187.4 1681.8,184.0 1682.9,184.0 1684.0,184.7 1685.1,184.0 1686.1,185.5 1687.2,184.6 1688.3,182.3 1689.4,186.0 1690.5,184.1 1691.6,188.1 1692.7,183.0 1693.8,184.0 1694.8,184.8 1695.9,182.6 1697.0,191.7 1698.1,192.5 1699.2,188.4 1700.3,181.4 1701.4,183.2 1702.4,187.4 1703.5,189.5 1704.6,185.8 1705.7,185.7 1706.8,189.2 1707.9,192.1 1709.0,190.4 1710.1,194.2 1711.1,184.4 1712.2,185.3 1713.3,187.9 1714.4,191.2 1715.5,188.4 1716.6,188.8 1717.7,186.1 1718.7,184.9 1719.8,188.4 1720.9,189.0 1722.0,185.2 1723.1,189.9 1724.2,203.5 1725.3,214.3 1726.4,203.8 1727.4,195.3 1728.5,194.8 1729.6,202.5 1730.7,204.9 1731.8,209.6 1732.9,198.7 1734.0,204.5 1735.0,203.9 1736.1,204.2 1737.2,202.7 1738.3,206.4 1739.4,201.5 1740.5,202.2 1741.6,201.1 1742.7,196.1 1743.7,196.5 1744.8,204.7 1745.9,197.1 1747.0,196.3 1748.1,198.4 1749.2,198.3 1750.3,194.9 1751.3,194.6 1752.4,202.2 1753.5,203.2 1754.6,192.2 1755.7,186.9 1756.8,192.3 1757.9,195.6 1759.0,203.0 1760.0,207.5 1761.1,200.9 1762.2,196.3 1763.3,207.3 1764.4,208.4 1765.5,209.7 1766.6,201.2 1767.6,197.7 1768.7,205.2 1769.8,201.9 1770.9,194.6 1772.0,200.4 1773.1,208.2 1774.2,211.4 1775.3,210.5 1776.3,200.8 1777.4,200.7 1778.5,194.9 1779.6,195.4 1780.7,207.0 1781.8,202.4 1782.9,197.0 1783.9,201.0 1785.0,201.2 1786.1,206.0 1787.2,199.7 1788.3,206.2 1789.4,212.8 1790.5,205.1 1791.6,194.0 1792.6,186.4 1793.7,194.0 1794.8,193.2 1795.9,179.0 1797.0,181.6 1798.1,186.8 1799.2,190.6 1800.2,187.6 1801.3,178.8 1802.4,183.3 1803.5,187.1 1804.6,184.3 1805.7,178.1 1806.8,182.9 1807.9,181.1 1808.9,181.0 1810.0,183.3 1811.1,186.1 1812.2,179.4 1813.3,175.3 1814.4,182.7 1815.5,189.7 1816.5,190.5 1817.6,185.0 1818.7,184.6 1819.8,184.4 1820.9,185.8 1822.0,189.0 1823.1,181.8 1824.2,181.4 1825.2,183.1 1826.3,181.2 1827.4,178.9 1828.5,183.1" fill="none" stroke="#f2f2f8" stroke-width="1.55" stroke-linejoin="round"/><rect x="1404.9" y="49.0" width="1.2" height="216.5" fill="#e6e63c"/><path d="M981.0 49.0 L1829.0 49.0 L1829.0 266.2" fill="none" stroke="#a8a8a8" stroke-width="2"/><rect x="981.0" y="264.75" width="848.0" height="1.5" fill="#a8a8a8"/><rect x="980.0" y="48.0" width="2" height="218.5" fill="#de4f3d"/></g>
<text transform="translate(926.43,55.80) scale(1.0600,1)" font-size="19.22" fill="#ffffff" style="">40.0</text>
<text transform="translate(926.43,99.30) scale(1.0600,1)" font-size="19.22" fill="#ffffff" style="">20.0</text>
<text transform="translate(937.74,143.30) scale(1.0600,1)" font-size="19.22" fill="#ffffff" style="">0.0</text>
<text transform="translate(919.66,186.30) scale(1.0600,1)" font-size="19.22" fill="#ffffff" style="">-20.0</text>
<text transform="translate(919.66,230.30) scale(1.0600,1)" font-size="19.22" fill="#ffffff" style="">-40.0</text>
<text transform="translate(919.66,272.30) scale(1.0600,1)" font-size="19.22" fill="#ffffff" style="">-60.0</text>
<text transform="translate(985.77,295.30) scale(1.0550,1)" font-size="18.80" fill="#ffffff" style="">205.4</text>
<text transform="translate(1068.74,295.30) scale(1.0550,1)" font-size="18.80" fill="#ffffff" style="">205.6</text>
<text transform="translate(1151.52,295.30) scale(1.0550,1)" font-size="18.80" fill="#ffffff" style="">205.8</text>
<text transform="translate(1242.64,295.30) scale(1.0550,1)" font-size="18.80" fill="#ffffff" style="">206</text>
<text transform="translate(1317.22,295.30) scale(1.0550,1)" font-size="18.80" fill="#ffffff" style="">206.2</text>
<text transform="translate(1399.84,295.30) scale(1.0550,1)" font-size="18.80" fill="#ffffff" style="">206.4</text>
<text transform="translate(1482.80,295.30) scale(1.0550,1)" font-size="18.80" fill="#ffffff" style="">206.6</text>
<text transform="translate(1565.59,295.30) scale(1.0550,1)" font-size="18.80" fill="#ffffff" style="">206.8</text>
<text transform="translate(1656.75,295.30) scale(1.0550,1)" font-size="18.80" fill="#ffffff" style="">207</text>
<text transform="translate(1731.28,295.30) scale(1.0550,1)" font-size="18.80" fill="#ffffff" style="">207.2</text>
<text transform="translate(1312.49,327.60) scale(1.0171,1)" font-size="23.42" fill="#ffffff" style="">Frequency (MHz)</text>
<text transform="translate(885.30,238.39) rotate(-90) scale(0.9795,1)" font-size="24.15" fill="#ffffff">Magnitude (dB)</text>
<g id="cir"><rect x="1403.2" y="473.3" width="15.2" height="353.99999999999994" fill="#404040"/><rect x="1369.3" y="544.0" width="477.0" height="1" fill="#9a9a9a"/><rect x="1369.3" y="615.0" width="477.0" height="1" fill="#9a9a9a"/><rect x="1369.3" y="686.0" width="477.0" height="1" fill="#9a9a9a"/><rect x="1369.3" y="757.0" width="477.0" height="1" fill="#9a9a9a"/><rect x="1391" y="473.3" width="1" height="353.99999999999994" fill="#9a9a9a"/><rect x="1423" y="473.3" width="1" height="353.99999999999994" fill="#9a9a9a"/><rect x="1455" y="473.3" width="1" height="353.99999999999994" fill="#9a9a9a"/><rect x="1486" y="473.3" width="1" height="353.99999999999994" fill="#9a9a9a"/><rect x="1518" y="473.3" width="1" height="353.99999999999994" fill="#9a9a9a"/><rect x="1550" y="473.3" width="1" height="353.99999999999994" fill="#9a9a9a"/><rect x="1582" y="473.3" width="1" height="353.99999999999994" fill="#9a9a9a"/><rect x="1614" y="473.3" width="1" height="353.99999999999994" fill="#9a9a9a"/><rect x="1646" y="473.3" width="1" height="353.99999999999994" fill="#9a9a9a"/><rect x="1678" y="473.3" width="1" height="353.99999999999994" fill="#9a9a9a"/><rect x="1710" y="473.3" width="1" height="353.99999999999994" fill="#9a9a9a"/><rect x="1741" y="473.3" width="1" height="353.99999999999994" fill="#9a9a9a"/><rect x="1773" y="473.3" width="1" height="353.99999999999994" fill="#9a9a9a"/><rect x="1805" y="473.3" width="1" height="353.99999999999994" fill="#9a9a9a"/><rect x="1837" y="473.3" width="1" height="353.99999999999994" fill="#9a9a9a"/><polyline points="1370.5,807.9 1371.4,738.0 1372.3,819.9 1373.1,757.5 1374.0,810.2 1374.9,760.8 1375.8,790.4 1376.7,773.4 1377.5,818.9 1378.4,751.9 1379.3,787.7 1380.2,803.8 1381.1,755.6 1382.0,817.5 1382.8,810.2 1383.7,741.4 1384.6,824.9 1385.5,768.0 1386.4,821.3 1387.2,759.0 1388.1,784.9 1389.0,759.8 1389.9,790.1 1390.8,758.6 1391.6,812.5 1392.5,748.7 1393.4,792.3 1394.3,834.3 1395.2,758.1 1396.0,742.8 1396.9,811.3 1397.8,803.0 1398.7,765.7 1399.6,803.7 1400.5,770.0 1401.3,824.7 1402.2,760.3 1403.1,799.1 1404.0,776.5 1404.9,767.6 1405.7,806.7 1406.6,782.3 1407.5,804.4 1408.4,768.5 1409.3,781.9 1410.1,809.8 1411.0,760.5 1411.9,790.1 1412.8,760.3 1413.7,819.3 1414.5,767.0 1415.4,772.7 1416.3,772.9 1417.2,811.2 1418.1,775.5 1418.9,803.4 1419.8,760.1 1420.7,795.0 1421.6,766.6 1422.5,815.3 1423.4,762.5 1424.2,806.7 1425.1,773.7 1426.0,808.2 1426.9,781.3 1427.8,798.5 1428.6,835.6 1429.5,771.0 1430.4,827.9 1431.3,765.7 1432.2,812.1 1433.0,807.8 1433.9,808.6 1434.8,769.3 1435.7,754.4 1436.6,802.1 1437.4,774.8 1438.3,768.4 1439.2,761.6 1440.1,782.9 1441.0,755.1 1441.9,763.1 1442.7,784.9 1443.6,772.1 1444.5,770.2 1445.4,811.0 1446.3,750.6 1447.1,835.6 1448.0,757.1 1448.9,780.6 1449.8,763.0 1450.7,780.0 1451.5,766.4 1452.4,812.0 1453.3,769.4 1454.2,796.1 1455.1,798.8 1455.9,754.2 1456.8,796.6 1457.7,748.2 1458.6,781.3 1459.5,810.8 1460.4,759.0 1461.2,817.4 1462.1,771.7 1463.0,798.9 1463.9,798.9 1464.8,775.8 1465.6,835.6 1466.5,752.1 1467.4,775.6 1468.3,835.6 1469.2,798.4 1470.0,766.6 1470.9,792.3 1471.8,762.1 1472.7,815.2 1473.6,765.2 1474.4,753.6 1475.3,801.8 1476.2,772.2 1477.1,809.0 1478.0,752.2 1478.8,788.7 1479.7,751.9 1480.6,801.2 1481.5,778.9 1482.4,754.1 1483.3,835.0 1484.1,809.0 1485.0,746.8 1485.9,718.5 1486.8,611.2 1487.7,690.8 1488.5,732.6 1489.4,754.0 1490.3,756.9 1491.2,760.1 1492.1,801.6 1492.9,743.8 1493.8,831.3 1494.7,767.2 1495.6,806.1 1496.5,807.8 1497.3,755.0 1498.2,833.4 1499.1,775.8 1500.0,766.4 1500.9,796.5 1501.8,818.5 1502.6,755.8 1503.5,761.1 1504.4,812.1 1505.3,764.3 1506.2,761.6 1507.0,785.0 1507.9,764.9 1508.8,813.5 1509.7,747.2 1510.6,830.7 1511.4,778.7 1512.3,787.0 1513.2,765.0 1514.1,710.6 1515.0,767.2 1515.8,820.4 1516.7,759.8 1517.6,814.5 1518.5,772.2 1519.4,815.3 1520.3,700.0 1521.1,805.8 1522.0,764.8 1522.9,785.4 1523.8,770.9 1524.7,762.5 1525.5,824.9 1526.4,774.7 1527.3,827.9 1528.2,820.2 1529.1,751.5 1529.9,769.6 1530.8,824.3 1531.7,819.2 1532.6,754.3 1533.5,799.8 1534.3,759.8 1535.2,785.4 1536.1,796.8 1537.0,749.4 1537.9,811.8 1538.8,815.8 1539.6,771.6 1540.5,761.9 1541.4,782.7 1542.3,757.7 1543.2,805.6 1544.0,760.8 1544.9,826.4 1545.8,813.5 1546.7,816.3 1547.6,767.6 1548.4,832.1 1549.3,806.6 1550.2,761.1 1551.1,817.2 1552.0,750.7 1552.8,750.8 1553.7,796.3 1554.6,764.0 1555.5,810.2 1556.4,747.4 1557.2,801.4 1558.1,751.6 1559.0,783.7 1559.9,763.6 1560.8,799.1 1561.7,771.3 1562.5,835.6 1563.4,771.4 1564.3,790.6 1565.2,762.6 1566.1,823.3 1566.9,835.2 1567.8,760.5 1568.7,787.2 1569.6,795.9 1570.5,767.9 1571.3,796.2 1572.2,777.4 1573.1,818.5 1574.0,767.3 1574.9,801.5 1575.7,755.6 1576.6,816.0 1577.5,772.2 1578.4,817.5 1579.3,769.1 1580.2,827.3 1581.0,770.6 1581.9,807.2 1582.8,766.6 1583.7,807.2 1584.6,753.0 1585.4,797.9 1586.3,775.2 1587.2,772.7 1588.1,802.8 1589.0,764.9 1589.8,822.5 1590.7,835.6 1591.6,753.8 1592.5,811.4 1593.4,773.6 1594.2,754.8 1595.1,824.0 1596.0,758.5 1596.9,807.8 1597.8,766.0 1598.7,811.1 1599.5,764.6 1600.4,784.6 1601.3,748.4 1602.2,808.3 1603.1,763.0 1603.9,816.6 1604.8,778.8 1605.7,793.1 1606.6,754.9 1607.5,765.4 1608.3,807.2 1609.2,761.0 1610.1,835.6 1611.0,777.3 1611.9,835.6 1612.7,751.6 1613.6,807.8 1614.5,765.6 1615.4,800.5 1616.3,747.4 1617.1,762.5 1618.0,799.5 1618.9,763.7 1619.8,830.5 1620.7,750.5 1621.6,805.3 1622.4,756.4 1623.3,805.4 1624.2,767.5 1625.1,773.9 1626.0,835.6 1626.8,782.6 1627.7,808.8 1628.6,769.3 1629.5,808.8 1630.4,779.4 1631.2,801.2 1632.1,772.6 1633.0,801.4 1633.9,781.2 1634.8,762.0 1635.6,819.2 1636.5,770.0 1637.4,794.7 1638.3,831.7 1639.2,753.7 1640.1,786.1 1640.9,768.8 1641.8,807.8 1642.7,776.3 1643.6,759.4 1644.5,754.1 1645.3,746.8 1646.2,828.8 1647.1,754.4 1648.0,819.9 1648.9,755.8 1649.7,811.7 1650.6,768.2 1651.5,795.7 1652.4,751.3 1653.3,801.8 1654.1,752.6 1655.0,807.2 1655.9,804.1 1656.8,738.0 1657.7,796.6 1658.6,757.5 1659.4,788.1 1660.3,754.9 1661.2,804.8 1662.1,745.3 1663.0,818.7 1663.8,766.5 1664.7,793.8 1665.6,795.9 1666.5,807.2 1667.4,758.5 1668.2,808.1 1669.1,764.2 1670.0,766.7 1670.9,802.2 1671.8,809.5 1672.6,768.1 1673.5,833.3 1674.4,765.6 1675.3,800.9 1676.2,768.7 1677.0,755.3 1677.9,831.5 1678.8,771.4 1679.7,780.5 1680.6,797.6 1681.5,783.1 1682.3,747.7 1683.2,815.3 1684.1,768.0 1685.0,810.9 1685.9,771.9 1686.7,812.0 1687.6,749.3 1688.5,792.1 1689.4,760.8 1690.3,819.7 1691.1,748.0 1692.0,813.3 1692.9,765.1 1693.8,759.0 1694.7,791.2 1695.5,761.8 1696.4,830.6 1697.3,761.2 1698.2,807.7 1699.1,785.1 1700.0,765.7 1700.8,806.3 1701.7,746.8 1702.6,752.7 1703.5,781.0 1704.4,753.2 1705.2,787.6 1706.1,768.0 1707.0,804.4 1707.9,770.2 1708.8,818.0 1709.6,760.9 1710.5,790.7 1711.4,835.6 1712.3,765.3 1713.2,792.2 1714.0,766.7 1714.9,808.1 1715.8,759.8 1716.7,814.0 1717.6,756.8 1718.5,757.7 1719.3,817.3 1720.2,747.5 1721.1,821.8 1722.0,781.5 1722.9,799.6 1723.7,771.9 1724.6,803.5 1725.5,794.5 1726.4,783.2 1727.3,760.1 1728.1,825.5 1729.0,766.5 1729.9,800.0 1730.8,772.0 1731.7,805.7 1732.5,782.1 1733.4,835.6 1734.3,754.5 1735.2,802.2 1736.1,774.3 1737.0,818.4 1737.8,823.5 1738.7,769.9 1739.6,821.4 1740.5,757.5 1741.4,769.5 1742.2,798.6 1743.1,771.9 1744.0,753.9 1744.9,770.2 1745.8,808.2 1746.6,812.0 1747.5,744.3 1748.4,763.1 1749.3,816.4 1750.2,776.7 1751.0,835.6 1751.9,776.0 1752.8,798.6 1753.7,774.8 1754.6,798.7 1755.4,808.8 1756.3,756.9 1757.2,783.1 1758.1,821.3 1759.0,768.5 1759.9,805.2 1760.7,771.5 1761.6,779.6 1762.5,813.5 1763.4,760.9 1764.3,806.7 1765.1,827.2 1766.0,767.4 1766.9,803.4 1767.8,822.4 1768.7,740.8 1769.5,781.2 1770.4,787.1 1771.3,764.2 1772.2,802.2 1773.1,748.0 1773.9,798.3 1774.8,772.4 1775.7,817.2 1776.6,760.0 1777.5,810.3 1778.4,763.0 1779.2,828.9 1780.1,752.0 1781.0,808.2 1781.9,756.6 1782.8,771.2 1783.6,812.0 1784.5,774.4 1785.4,789.5 1786.3,764.5 1787.2,807.0 1788.0,765.4 1788.9,819.4 1789.8,777.0 1790.7,795.7 1791.6,759.1 1792.4,806.7 1793.3,768.9 1794.2,806.2 1795.1,777.3 1796.0,813.6 1796.9,759.0 1797.7,788.2 1798.6,782.4 1799.5,820.1 1800.4,767.6 1801.3,815.4 1802.1,766.1 1803.0,812.2 1803.9,779.3 1804.8,788.5 1805.7,769.0 1806.5,806.4 1807.4,770.9 1808.3,799.6 1809.2,798.5 1810.1,737.8 1810.9,811.3 1811.8,811.6 1812.7,812.7 1813.6,767.8 1814.5,791.8 1815.3,757.7 1816.2,788.0 1817.1,748.0 1818.0,792.5 1818.9,768.7 1819.8,775.6 1820.6,802.5 1821.5,752.6 1822.4,767.6 1823.3,800.9 1824.2,768.8 1825.0,794.9 1825.9,762.6 1826.8,809.5 1827.7,761.4 1828.6,823.9 1829.4,749.8 1830.3,834.2 1831.2,761.7 1832.1,808.6 1833.0,770.5 1833.8,764.1 1834.7,800.2 1835.6,816.9 1836.5,756.7 1837.4,813.2 1838.3,792.4 1839.1,769.3 1840.0,825.7 1840.9,803.1 1841.8,816.3 1842.7,759.3 1843.5,822.4 1844.4,757.2 1845.3,805.6" fill="none" stroke="#f4f4f4" stroke-width="1.35" stroke-linejoin="bevel" clip-path="url(#clip2)"/><line x1="1419.6" y1="473.3" x2="1419.6" y2="827.3" stroke="#f0f040" stroke-width="1.2" stroke-dasharray="1 1"/><rect x="1419.0" y="692" width="1.3" height="66" fill="#e8e890"/><circle cx="1419.9" cy="691.6" r="6.1" fill="#e80000"/><circle cx="1487.1" cy="641.6" r="6.1" fill="#f5f020"/><circle cx="1514.0" cy="708.6" r="6.1" fill="#7a2fd0"/><circle cx="1520.6" cy="697.9" r="6.1" fill="#1c9ce4"/><path d="M1369.3 473.3 L1846.3 473.3 L1846.3 828.0" fill="none" stroke="#a8a8a8" stroke-width="2"/><rect x="1369.3" y="826.55" width="477.0" height="1.5" fill="#a8a8a8"/><rect x="1368.3" y="472.3" width="2" height="355.99999999999994" fill="#de4f3d"/></g>
<text transform="translate(1312.53,480.20) scale(1.0528,1)" font-size="19.36" fill="#ffffff" style="">-10.0</text>
<text transform="translate(1312.53,551.40) scale(1.0528,1)" font-size="19.36" fill="#ffffff" style="">-20.0</text>
<text transform="translate(1312.53,622.40) scale(1.0528,1)" font-size="19.36" fill="#ffffff" style="">-30.0</text>
<text transform="translate(1312.53,693.40) scale(1.0528,1)" font-size="19.36" fill="#ffffff" style="">-40.0</text>
<text transform="translate(1312.53,764.40) scale(1.0528,1)" font-size="19.36" fill="#ffffff" style="">-50.0</text>
<text transform="translate(1312.53,834.20) scale(1.0528,1)" font-size="19.36" fill="#ffffff" style="">-60.0</text>
<text transform="translate(1379.78,848.30) scale(1.0400,1)" font-size="13.85" fill="#ffffff" style="">-60</text>
<text transform="translate(1411.64,868.60) scale(1.0400,1)" font-size="13.85" fill="#ffffff" style="">-40</text>
<text transform="translate(1443.50,848.30) scale(1.0400,1)" font-size="13.85" fill="#ffffff" style="">-20</text>
<text transform="translate(1483.00,868.60) scale(1.0400,1)" font-size="13.85" fill="#ffffff" style="">0</text>
<text transform="translate(1510.77,848.30) scale(1.0400,1)" font-size="13.85" fill="#ffffff" style="">20</text>
<text transform="translate(1542.83,868.60) scale(1.0400,1)" font-size="13.85" fill="#ffffff" style="">40</text>
<text transform="translate(1574.49,848.30) scale(1.0400,1)" font-size="13.85" fill="#ffffff" style="">60</text>
<text transform="translate(1606.41,868.60) scale(1.0400,1)" font-size="13.85" fill="#ffffff" style="">80</text>
<text transform="translate(1634.02,848.30) scale(1.0400,1)" font-size="13.85" fill="#ffffff" style="">100</text>
<text transform="translate(1665.88,868.60) scale(1.0400,1)" font-size="13.85" fill="#ffffff" style="">120</text>
<text transform="translate(1697.74,848.30) scale(1.0400,1)" font-size="13.85" fill="#ffffff" style="">140</text>
<text transform="translate(1729.60,868.60) scale(1.0400,1)" font-size="13.85" fill="#ffffff" style="">160</text>
<text transform="translate(1761.46,848.30) scale(1.0400,1)" font-size="13.85" fill="#ffffff" style="">180</text>
<text transform="translate(1793.50,868.60) scale(1.0400,1)" font-size="13.85" fill="#ffffff" style="">200</text>
<text transform="translate(1825.36,848.30) scale(1.0400,1)" font-size="13.85" fill="#ffffff" style="">220</text>
<text transform="translate(1496.79,896.40) scale(1.0115,1)" font-size="19.93" fill="#ffffff" style="">Distance Difference (km)</text>
<text transform="translate(1288.40,719.91) rotate(-90) scale(0.9940,1)" font-size="20.22" fill="#ffffff">Magnitude (dB)</text>
</svg>
</div>
</body></html>
